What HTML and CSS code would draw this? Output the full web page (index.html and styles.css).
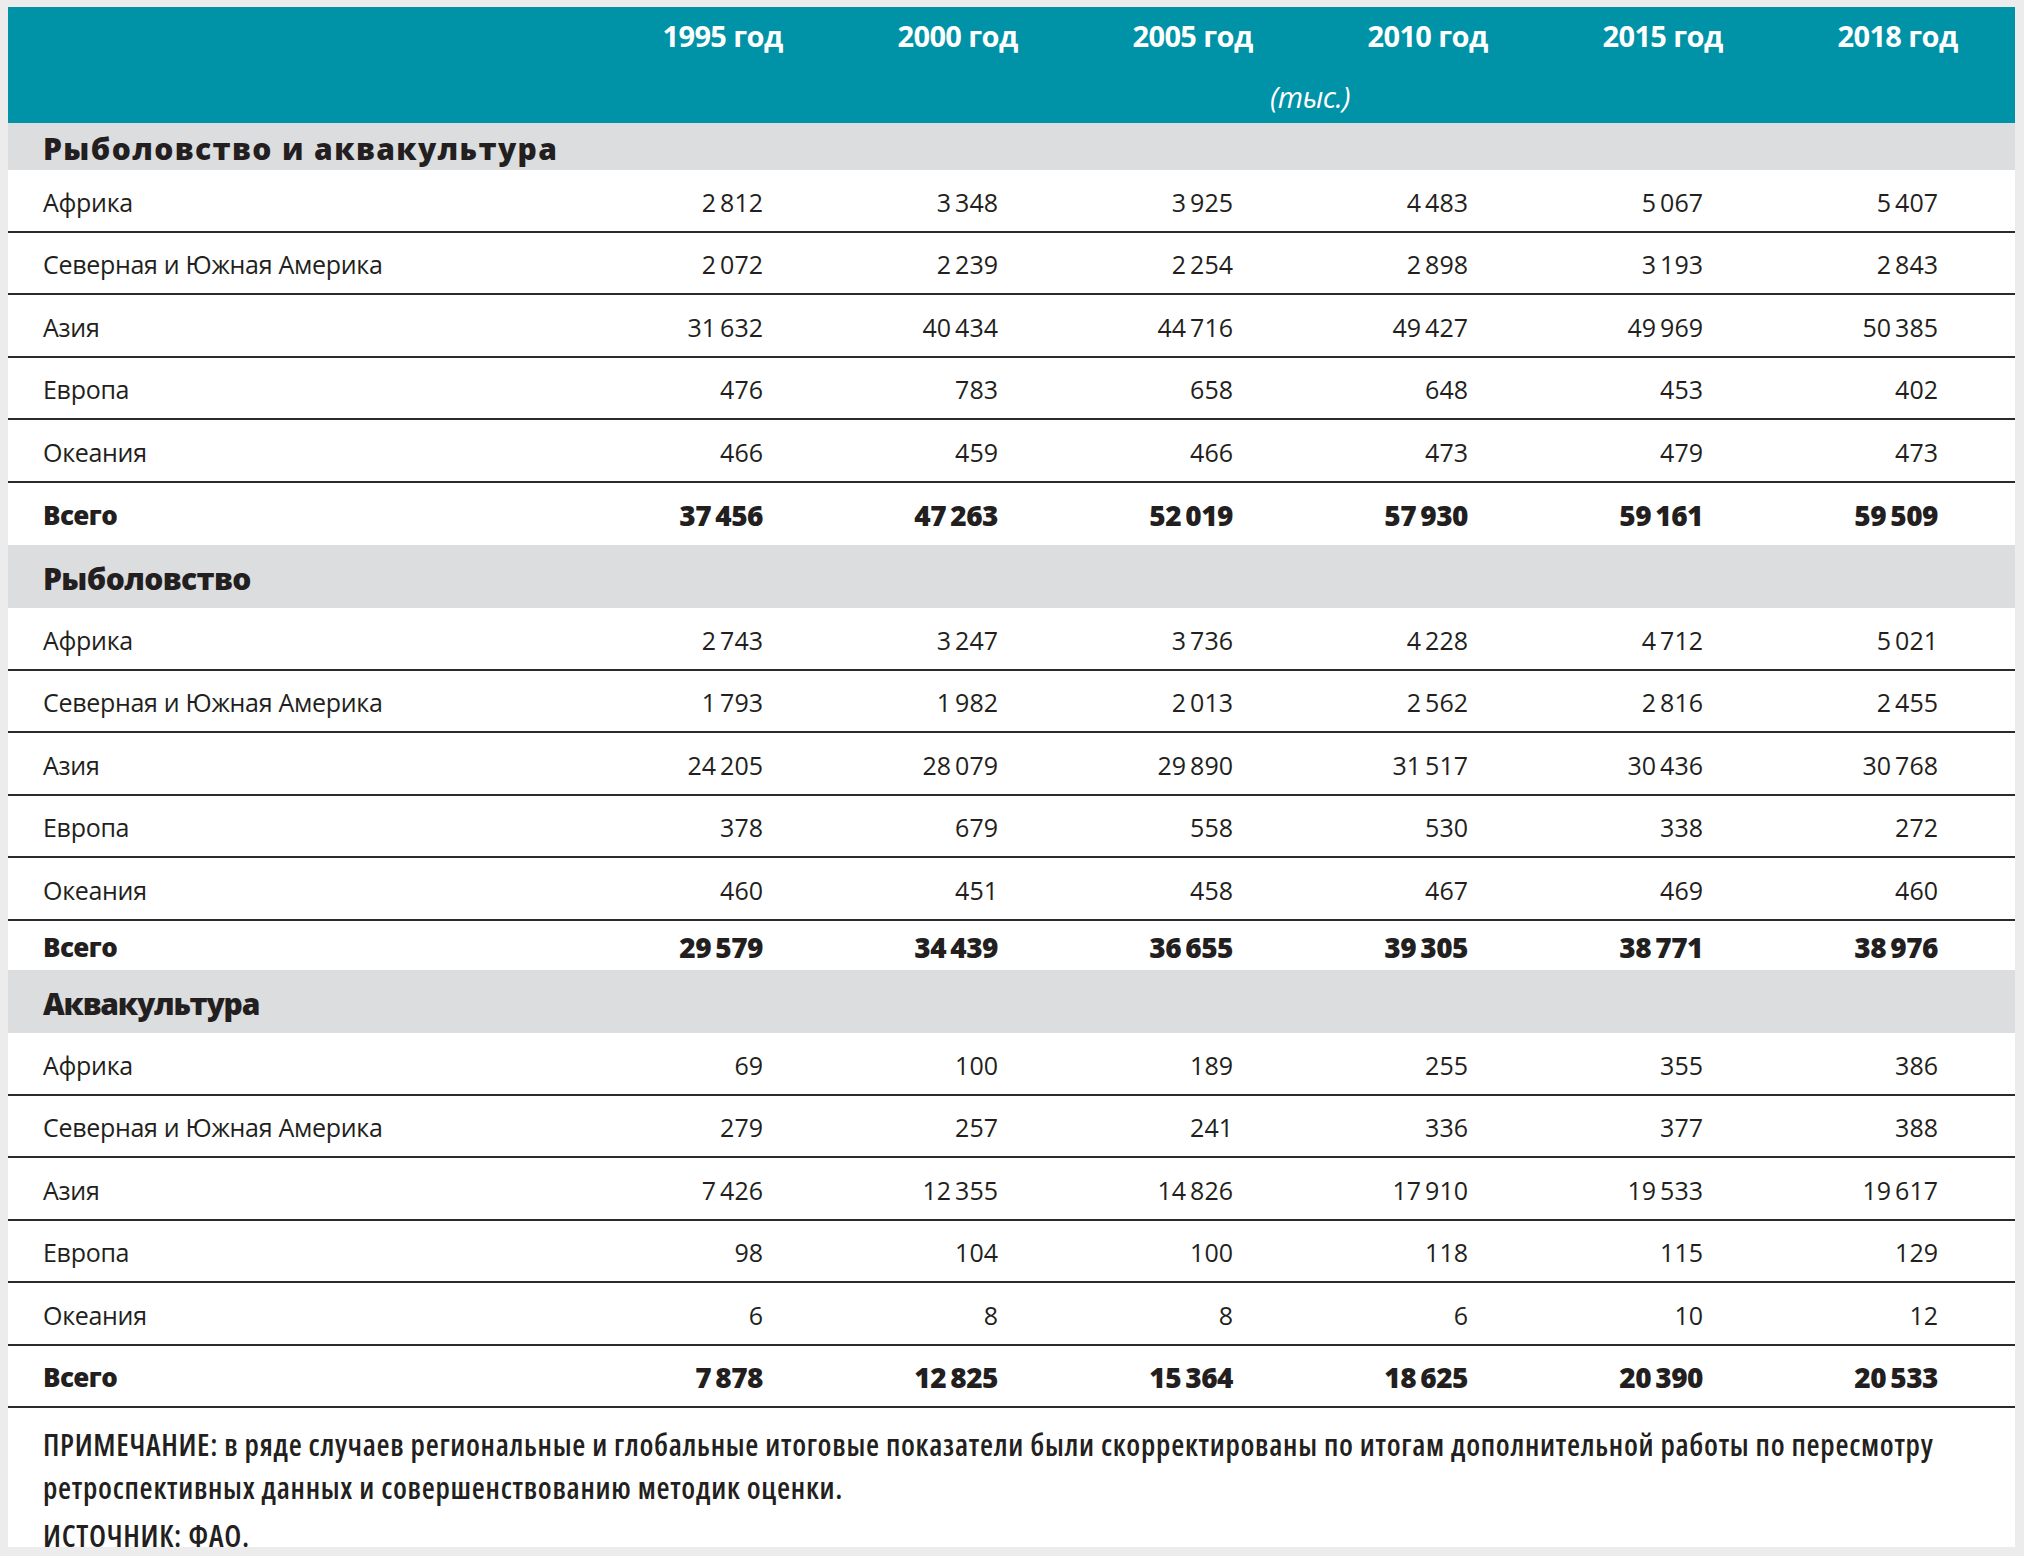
FILE: index.html
```html
<!DOCTYPE html>
<html lang="ru">
<head>
<meta charset="utf-8">
<title>Таблица</title>
<link rel="stylesheet" href="styles.css">
</head>
<body>
<div class="sheet">
  <div class="head">
    <div class="hcell"></div>
    <div class="hcell year">1995 год</div>
    <div class="hcell year">2000 год</div>
    <div class="hcell year">2005 год</div>
    <div class="hcell year">2010 год</div>
    <div class="hcell year">2015 год</div>
    <div class="hcell year">2018 год</div>
    <div class="unit">(тыс.)</div>
  </div>

  <div class="section first"><span class="sec-title wide">Рыболовство и аквакультура</span></div>
  <div class="row"><div class="lab">Африка</div><div class="num">2&#8201;812</div><div class="num">3&#8201;348</div><div class="num">3&#8201;925</div><div class="num">4&#8201;483</div><div class="num">5&#8201;067</div><div class="num">5&#8201;407</div></div>
  <div class="row"><div class="lab">Северная и Южная Америка</div><div class="num">2&#8201;072</div><div class="num">2&#8201;239</div><div class="num">2&#8201;254</div><div class="num">2&#8201;898</div><div class="num">3&#8201;193</div><div class="num">2&#8201;843</div></div>
  <div class="row"><div class="lab">Азия</div><div class="num">31&#8201;632</div><div class="num">40&#8201;434</div><div class="num">44&#8201;716</div><div class="num">49&#8201;427</div><div class="num">49&#8201;969</div><div class="num">50&#8201;385</div></div>
  <div class="row"><div class="lab">Европа</div><div class="num">476</div><div class="num">783</div><div class="num">658</div><div class="num">648</div><div class="num">453</div><div class="num">402</div></div>
  <div class="row"><div class="lab">Океания</div><div class="num">466</div><div class="num">459</div><div class="num">466</div><div class="num">473</div><div class="num">479</div><div class="num">473</div></div>
  <div class="row total noline"><div class="lab">Всего</div><div class="num">37&#8201;456</div><div class="num">47&#8201;263</div><div class="num">52&#8201;019</div><div class="num">57&#8201;930</div><div class="num">59&#8201;161</div><div class="num">59&#8201;509</div></div>

  <div class="section"><span class="sec-title">Рыболовство</span></div>
  <div class="row"><div class="lab">Африка</div><div class="num">2&#8201;743</div><div class="num">3&#8201;247</div><div class="num">3&#8201;736</div><div class="num">4&#8201;228</div><div class="num">4&#8201;712</div><div class="num">5&#8201;021</div></div>
  <div class="row"><div class="lab">Северная и Южная Америка</div><div class="num">1&#8201;793</div><div class="num">1&#8201;982</div><div class="num">2&#8201;013</div><div class="num">2&#8201;562</div><div class="num">2&#8201;816</div><div class="num">2&#8201;455</div></div>
  <div class="row"><div class="lab">Азия</div><div class="num">24&#8201;205</div><div class="num">28&#8201;079</div><div class="num">29&#8201;890</div><div class="num">31&#8201;517</div><div class="num">30&#8201;436</div><div class="num">30&#8201;768</div></div>
  <div class="row"><div class="lab">Европа</div><div class="num">378</div><div class="num">679</div><div class="num">558</div><div class="num">530</div><div class="num">338</div><div class="num">272</div></div>
  <div class="row"><div class="lab">Океания</div><div class="num">460</div><div class="num">451</div><div class="num">458</div><div class="num">467</div><div class="num">469</div><div class="num">460</div></div>
  <div class="row total short noline"><div class="lab">Всего</div><div class="num">29&#8201;579</div><div class="num">34&#8201;439</div><div class="num">36&#8201;655</div><div class="num">39&#8201;305</div><div class="num">38&#8201;771</div><div class="num">38&#8201;976</div></div>

  <div class="section"><span class="sec-title tight">Аквакультура</span></div>
  <div class="row"><div class="lab">Африка</div><div class="num">69</div><div class="num">100</div><div class="num">189</div><div class="num">255</div><div class="num">355</div><div class="num">386</div></div>
  <div class="row"><div class="lab">Северная и Южная Америка</div><div class="num">279</div><div class="num">257</div><div class="num">241</div><div class="num">336</div><div class="num">377</div><div class="num">388</div></div>
  <div class="row"><div class="lab">Азия</div><div class="num">7&#8201;426</div><div class="num">12&#8201;355</div><div class="num">14&#8201;826</div><div class="num">17&#8201;910</div><div class="num">19&#8201;533</div><div class="num">19&#8201;617</div></div>
  <div class="row"><div class="lab">Европа</div><div class="num">98</div><div class="num">104</div><div class="num">100</div><div class="num">118</div><div class="num">115</div><div class="num">129</div></div>
  <div class="row"><div class="lab">Океания</div><div class="num">6</div><div class="num">8</div><div class="num">8</div><div class="num">6</div><div class="num">10</div><div class="num">12</div></div>
  <div class="row total"><div class="lab">Всего</div><div class="num">7&#8201;878</div><div class="num">12&#8201;825</div><div class="num">15&#8201;364</div><div class="num">18&#8201;625</div><div class="num">20&#8201;390</div><div class="num">20&#8201;533</div></div>

  <div class="notes">
    <p class="note">ПРИМЕЧАНИЕ: в ряде случаев региональные и глобальные итоговые показатели были скорректированы по итогам дополнительной работы по пересмотру<br>ретроспективных данных и совершенствованию методик оценки.</p>
    <p class="note source">ИСТОЧНИК: ФАО.</p>
  </div>
</div>
</body>
</html>
```

FILE: styles.css
```css
html, body {
  margin: 0;
  padding: 0;
}

body {
  background: #ececec;
  width: 2024px;
  height: 1556px;
  overflow: hidden;
  font-family: "Open Sans", "Noto Sans", sans-serif;
  color: #231f20;
}

.sheet {
  margin: 7px 9px 0 8px;
  width: 2007px;
  background: #ffffff;
}

.head {
  display: grid;
  grid-template-columns: 597px repeat(6, 235px);
  grid-template-rows: 58px 58px;
  background: #0092a6;
  color: #ffffff;
}

.hcell {
  display: flex;
  align-items: center;
  justify-content: center;
  padding-bottom: 2px;
}

.year {
  font-weight: 700;
  font-size: 29px;
  letter-spacing: -0.6px;
}

.unit {
  grid-column: 2 / 8;
  display: flex;
  align-items: center;
  justify-content: center;
  font-style: italic;
  font-size: 29px;
  letter-spacing: -0.5px;
  padding-top: 4px;
}

.section {
  background: #dcdddf;
  height: 63px;
  display: flex;
  align-items: center;
  padding-left: 35px;
  padding-top: 3px;
  box-sizing: border-box;
}

.section.first {
  height: 47px;
}

.sec-title {
  font-weight: 800;
  font-size: 30px;
  letter-spacing: -0.6px;
}

.sec-title.wide {
  letter-spacing: 1.4px;
}

.sec-title.tight {
  letter-spacing: -1.2px;
}

.row {
  display: grid;
  grid-template-columns: 597px repeat(6, 235px);
  height: 62.5px;
  box-sizing: border-box;
  border-bottom: 2px solid #2b2b2b;
  align-items: center;
  padding-top: 3px;
  font-size: 25px;
}

.row.noline {
  border-bottom: none;
}

.row.short {
  height: 49.5px;
}

.lab {
  padding-left: 35px;
  letter-spacing: -0.3px;
}

.num {
  text-align: right;
  padding-right: 77px;
  letter-spacing: 0;
}

.total {
  font-weight: 800;
  font-size: 28px;
}

.total .lab {
  font-size: 26px;
  letter-spacing: -0.6px;
}

.total .num {
  letter-spacing: -0.5px;
}

.notes {
  height: 139px;
  overflow: hidden;
  box-sizing: border-box;
  padding: 15px 0 0 35px;
}

.note {
  margin: 0;
  white-space: nowrap;
  font-weight: 600;
  font-size: 30px;
  font-stretch: 75%;
  letter-spacing: 0.7px;
  line-height: 43px;
  color: #231f20;
}

.note.source {
  margin-top: 5px;
}
```
